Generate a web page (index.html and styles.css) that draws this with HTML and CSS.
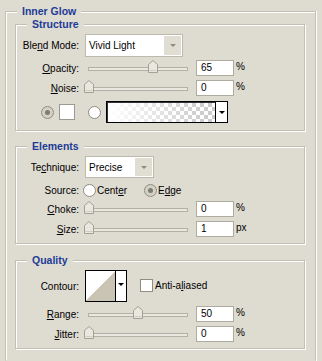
FILE: index.html
```html
<!DOCTYPE html>
<html lang="en">
<head>
    <meta charset="UTF-8">
    <title>Inner Glow</title>
    <link rel="stylesheet" href="styles.css">
</head>
<body>
    <fieldset class="panel">
        <legend>Inner Glow</legend>

        <fieldset class="group structure">
            <legend>Structure</legend>
            <div class="row row-select">
                <span class="label">Ble<u>n</u>d Mode:</span>
                <div class="select select-wide">
                    <span class="select-value">Vivid Light</span>
                    <span class="select-btn"><i class="arrow"></i></span>
                </div>
            </div>
            <div class="row row-slider first">
                <span class="label"><u>O</u>pacity:</span>
                <div class="track"><span class="thumb" style="left: 65%"></span></div>
                <span class="num">65</span><span class="unit">%</span>
            </div>
            <div class="row row-slider">
                <span class="label"><u>N</u>oise:</span>
                <div class="track"><span class="thumb" style="left: 0%"></span></div>
                <span class="num">0</span><span class="unit">%</span>
            </div>
            <div class="row row-color">
                <span class="radio checked"></span>
                <span class="swatch"></span>
                <span class="radio radio-gradient"></span>
                <div class="gradient">
                    <span class="gradient-fill"></span>
                    <span class="dark-btn"><i class="arrow black"></i></span>
                </div>
            </div>
        </fieldset>

        <fieldset class="group elements">
            <legend>Elements</legend>
            <div class="row row-select small">
                <span class="label">Te<u>c</u>hnique:</span>
                <div class="select select-narrow">
                    <span class="select-value">Precise</span>
                    <span class="select-btn"><i class="arrow"></i></span>
                </div>
            </div>
            <div class="row row-source">
                <span class="label">Source:</span>
                <span class="radio"></span><span class="opt">Cent<u>e</u>r</span>
                <span class="radio checked opt-gap"></span><span class="opt">E<u>d</u>ge</span>
            </div>
            <div class="row row-slider third">
                <span class="label"><u>C</u>hoke:</span>
                <div class="track"><span class="thumb" style="left: 0%"></span></div>
                <span class="num">0</span><span class="unit">%</span>
            </div>
            <div class="row row-slider">
                <span class="label"><u>S</u>ize:</span>
                <div class="track"><span class="thumb" style="left: 0%"></span></div>
                <span class="num">1</span><span class="unit">px</span>
            </div>
        </fieldset>

        <fieldset class="group quality">
            <legend>Quality</legend>
            <div class="row row-contour">
                <span class="label">Contour:</span>
                <div class="contour">
                    <span class="contour-fill"></span>
                    <span class="dark-btn"><i class="arrow black"></i></span>
                </div>
                <span class="checkbox"></span><span class="opt">Anti-a<u>l</u>iased</span>
            </div>
            <div class="row row-slider">
                <span class="label"><u>R</u>ange:</span>
                <div class="track"><span class="thumb" style="left: 50%"></span></div>
                <span class="num">50</span><span class="unit">%</span>
            </div>
            <div class="row row-slider">
                <span class="label"><u>J</u>itter:</span>
                <div class="track"><span class="thumb" style="left: 0%"></span></div>
                <span class="num">0</span><span class="unit">%</span>
            </div>
        </fieldset>
    </fieldset>
</body>
</html>
```

FILE: styles.css
```css
body {
    margin: 0;
    width: 322px;
    height: 361px;
    overflow: hidden;
    background-color: #dedbd1;
    font-family: "Liberation Sans", Arial, sans-serif;
    font-size: 10px;
    color: #000;
}
u { text-decoration: underline; text-underline-offset: 1px; }

/* etched group frames */
fieldset {
    box-sizing: border-box;
    min-width: 0;
    border: 1px solid #c2bfb3;
    box-shadow: inset 1px 1px 0 #fff, 1px 1px 0 #fff;
}
legend {
    font-weight: bold;
    font-size: 10.5px;
    line-height: 13px;
    color: #1d3b97;
    padding: 0 5px;
    background: #dedbd1;
}
.panel {
    width: 311px;
    height: 356px;
    margin: 5px 0 0 5px;
    padding: 0 10px 0 9px;
    border-bottom-color: transparent;
    box-shadow: inset 1px 1px 0 #fff, 1px 0 0 #fff;
}
.panel > legend { margin-left: 2px; }
.group { margin: 0; padding: 3px 0 6px 0; }
.group > legend { margin-left: 11px; }
.structure { padding-bottom: 7px; }
.elements { margin-top: 9px; }
.quality { margin-top: 10px; }

/* rows */
.row {
    display: flex;
    align-items: center;
    height: 16px;
    margin-top: 4px;
}
.row-select { height: 23px; margin-top: 0; }
.row-select.small { height: 22px; }
.row-slider.first, .row-slider.third { margin-top: 3px; }
.row-color { height: 22px; margin-top: 5px; }
.row-contour { height: 32px; margin-top: 0; }
.label {
    width: 63px;
    flex: none;
    text-align: right;
}

/* dropdowns */
.select {
    box-sizing: border-box;
    height: 100%;
    margin-left: 6px;
    display: flex;
    border: 1px solid #bcb9ad;
    background: #fff;
}
.select-wide { width: 98px; }
.select-narrow { width: 69px; }
.select-value {
    flex: 1;
    padding-left: 3px;
    line-height: 21px;
}
.select-btn {
    width: 17px;
    margin: 1px;
    background: #e0ddd3;
    display: flex;
    align-items: center;
    justify-content: center;
}
.arrow {
    width: 0;
    height: 0;
    border-left: 3px solid transparent;
    border-right: 3px solid transparent;
    border-top: 3px solid #8e8b7f;
}
.arrow.black { border-top-color: #000; }

/* sliders */
.track {
    position: relative;
    box-sizing: border-box;
    width: 100px;
    height: 4px;
    margin: 2px 0 0 9px;
    border: 1px solid #b3b0a4;
    background: #e9e7e0;
}
.thumb {
    position: absolute;
    top: -8px;
    width: 10px;
    height: 13px;
    margin-left: -5px;
    background: no-repeat url("data:image/svg+xml,%3Csvg xmlns='http://www.w3.org/2000/svg' width='10' height='13'%3E%3Cpath d='M0.5 4.5 L5 0.5 L9.5 4.5 V12.5 H0.5 Z' fill='%23e9e7e0' stroke='%23a3a093'/%3E%3Cpath d='M1.5 10.5 H8.5' stroke='%23cfccc1'/%3E%3C/svg%3E");
}
.num {
    box-sizing: border-box;
    width: 38px;
    height: 16px;
    margin-left: 8px;
    padding-left: 4px;
    line-height: 14px;
    border: 1px solid #aeab9f;
    background: #fff;
}
.unit { margin: -3px 0 0 2px; }

/* radios, swatches */
.radio {
    box-sizing: border-box;
    width: 13px;
    height: 13px;
    flex: none;
    border-radius: 50%;
    border: 1px solid #8f8c80;
    background: #fff;
    display: flex;
    align-items: center;
    justify-content: center;
}
.radio.checked { background: #d3d0c5; }
.radio.checked::after {
    content: "";
    width: 5px;
    height: 5px;
    border-radius: 50%;
    background: #7f7c70;
}
.row-color > .radio:first-child { margin-left: 25px; }
.swatch {
    box-sizing: border-box;
    width: 16px;
    height: 16px;
    margin-left: 5px;
    border: 1px solid #9c998d;
    background: #fff;
}
.radio-gradient { margin-left: 13px; }
.gradient {
    box-sizing: border-box;
    display: flex;
    width: 122px;
    height: 22px;
    margin-left: 5px;
    border: 1px solid #000;
    box-shadow: inset 1px 1px 0 #333;
}
.gradient-fill {
    flex: 1;
    margin: 1px 0 0 1px;
    background:
        linear-gradient(to right, #fff 0%, rgba(255, 255, 255, 0) 90%),
        repeating-conic-gradient(#cbcbcb 0 25%, #fff 0 50%) 0 0 / 8px 8px;
}
.dark-btn {
    width: 11px;
    border-left: 1px solid #000;
    background: #fff;
    display: flex;
    align-items: center;
    justify-content: center;
}

.row-source .radio { margin-left: 4px; }
.row-source .opt-gap { margin-left: 17px; }
.opt { margin-left: 1px; }

/* contour */
.contour {
    box-sizing: border-box;
    display: flex;
    width: 42px;
    height: 32px;
    margin-left: 6px;
    border: 1px solid #000;
}
.contour-fill {
    flex: 1;
    background: linear-gradient(to bottom right, #fff 50%, #c9c4b4 50%);
}
.contour .dark-btn { align-items: flex-start; padding-top: 12px; box-sizing: border-box; }
.checkbox {
    box-sizing: border-box;
    width: 13px;
    height: 13px;
    margin: -2px 0 0 13px;
    border: 1px solid #8f8c80;
    background: #fff;
}
.row-contour .opt { margin: -2px 0 0 2px; }
```
